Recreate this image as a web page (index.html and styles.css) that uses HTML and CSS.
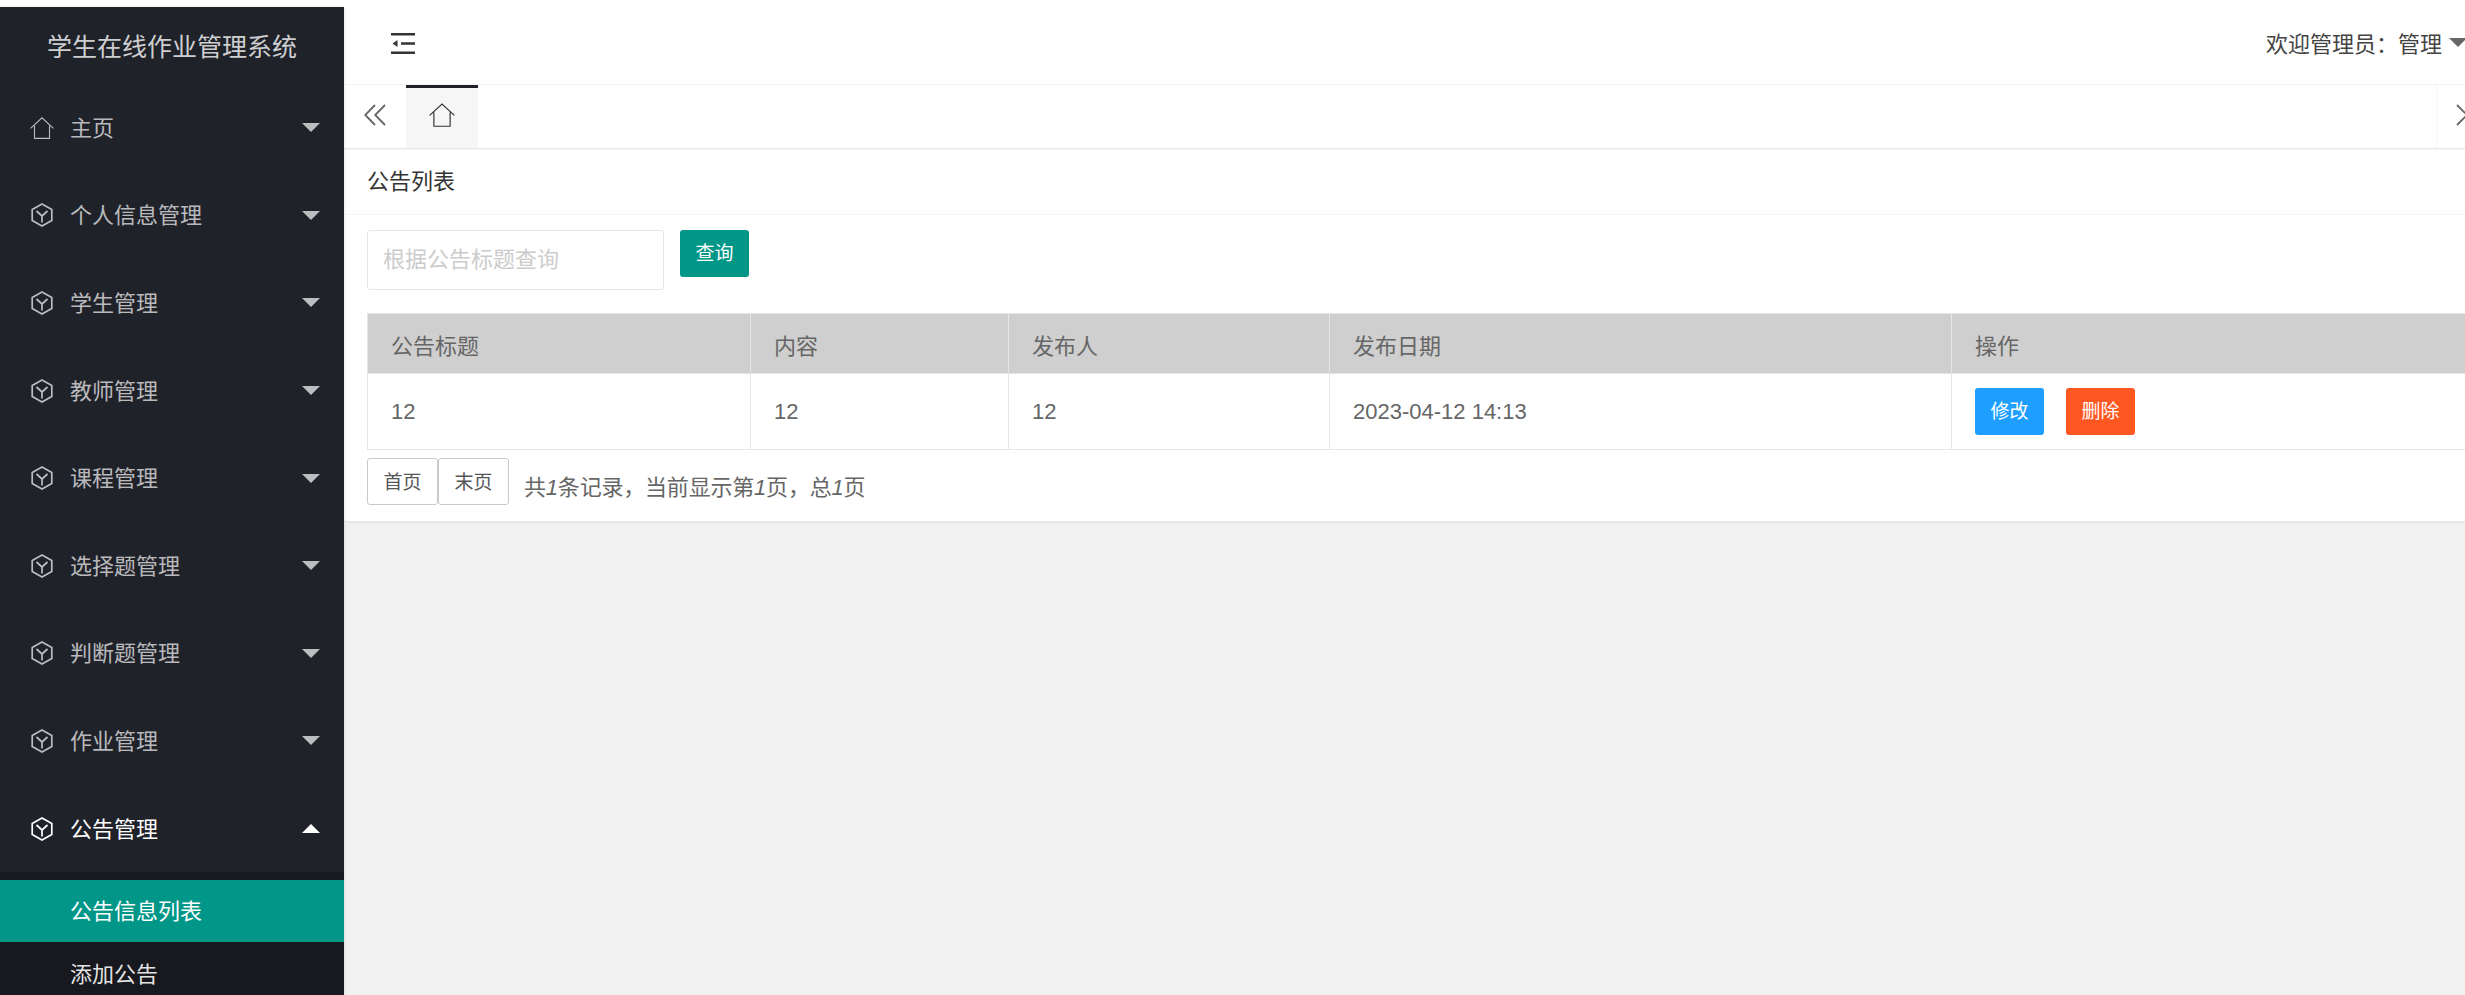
FILE: index.html
```html
<!DOCTYPE html>
<html lang="zh-CN">
<head>
<meta charset="utf-8">
<title>学生在线作业管理系统</title>
<link rel="stylesheet" href="styles.css">
</head>
<body>
<svg class="defs" width="0" height="0" aria-hidden="true">
  <symbol id="i-home" viewBox="0 0 24 22"><path d="M.6 11.300 12 .8l11.400 10.500M4.500 8.800v12.600h15V8.800" fill="none" stroke="currentColor" stroke-width="1.100"/></symbol>
  <symbol id="i-cube" viewBox="0 0 22 24"><path d="M11 1 20.800 6.600v10.800L11 23 1.200 17.400V6.600zM5.500 8l5.500 5 5.500-5M11 13v6.500" fill="none" stroke="currentColor" stroke-width="1.700"/></symbol>
</svg>
<div class="app">
  <aside class="side">
    <div class="logo">学生在线作业管理系统</div>
    <ul class="menu">
      <li class="mi"><svg class="mi-ic"><use href="#i-home"/></svg><span>主页</span><i class="caret"></i></li>
      <li class="mi"><svg class="mi-ic"><use href="#i-cube"/></svg><span>个人信息管理</span><i class="caret"></i></li>
      <li class="mi"><svg class="mi-ic"><use href="#i-cube"/></svg><span>学生管理</span><i class="caret"></i></li>
      <li class="mi"><svg class="mi-ic"><use href="#i-cube"/></svg><span>教师管理</span><i class="caret"></i></li>
      <li class="mi"><svg class="mi-ic"><use href="#i-cube"/></svg><span>课程管理</span><i class="caret"></i></li>
      <li class="mi"><svg class="mi-ic"><use href="#i-cube"/></svg><span>选择题管理</span><i class="caret"></i></li>
      <li class="mi"><svg class="mi-ic"><use href="#i-cube"/></svg><span>判断题管理</span><i class="caret"></i></li>
      <li class="mi"><svg class="mi-ic"><use href="#i-cube"/></svg><span>作业管理</span><i class="caret"></i></li>
      <li class="mi open"><svg class="mi-ic"><use href="#i-cube"/></svg><span>公告管理</span><i class="caret up"></i></li>
    </ul>
    <ul class="sub">
      <li class="sub-i active">公告信息列表</li>
      <li class="sub-i">添加公告</li>
    </ul>
  </aside>
  <main class="main">
    <header class="top">
      <svg class="shrink" viewBox="0 0 24 21"><path d="M0 0h24v2.400H0zM0 18.600h24V21H0zM10 9.300h14v2.400H10zM1.500 10.500 6.500 7v7z" fill="#333"/></svg>
      <div class="user">欢迎管理员：管理<i class="caret dark"></i></div>
    </header>
    <nav class="tabs">
      <div class="tab-arrow">
        <svg class="chev2" viewBox="0 0 22 22"><path d="M11 1 1.200 11 11 21M21 1l-9.800 10L21 21" fill="none" stroke="#666" stroke-width="1.800"/></svg>
      </div>
      <div class="tab"><svg class="tab-ic"><use href="#i-home"/></svg></div>
      <div class="tab-fill"></div>
      <div class="tab-next">
        <svg class="chev" viewBox="0 0 12 22"><path d="M1 1l10 10L1 21" fill="none" stroke="#666" stroke-width="1.800"/></svg>
      </div>
    </nav>
    <section class="panel">
      <h2 class="panel-title">公告列表</h2>
      <div class="panel-body">
        <form class="search">
          <input class="search-input" type="text" placeholder="根据公告标题查询">
          <button class="btn btn-green" type="button">查询</button>
        </form>
        <table class="grid">
          <colgroup><col class="c1"><col class="c2"><col class="c3"><col class="c4"><col></colgroup>
          <thead><tr><th>公告标题</th><th>内容</th><th>发布人</th><th>发布日期</th><th>操作</th></tr></thead>
          <tbody><tr><td>12</td><td>12</td><td>12</td><td>2023-04-12 14:13</td>
            <td class="ops"><button class="btn btn-blue" type="button">修改</button><button class="btn btn-red" type="button">删除</button></td></tr></tbody>
        </table>
        <div class="pager">
          <a class="pg">首页</a><a class="pg">末页</a>
          <span class="pg-info">共<i>1</i>条记录，当前显示第<i>1</i>页，总<i>1</i>页</span>
        </div>
      </div>
    </section>
  </main>
</div>
</body>
</html>
```
FILE: styles.css
```css
* { box-sizing: border-box; }
html, body { margin: 0; height: 100%; overflow: hidden; }
body {
  background: #fff;
  font-family: "Liberation Sans", "Noto Sans CJK SC", sans-serif;
  font-size: 22px;
  color: #666;
}
ul { list-style: none; margin: 0; padding: 0; }
.defs { position: absolute; }
.app { display: flex; width: 2465px; height: 995px; overflow: hidden; }

.side {
  flex: none;
  width: 344px;
  margin-top: 7px;
  background: #20222a;
  box-shadow: 1px 0 3px rgba(0, 0, 0, .08);
  position: relative;
  z-index: 2;
}
.logo {
  height: 77px;
  display: flex;
  align-items: center;
  justify-content: center;
  padding-bottom: 1px;
  font-size: 25px;
  color: rgba(255, 255, 255, .8);
}
.mi {
  height: 87.6px;
  display: flex;
  align-items: center;
  padding-left: 30px;
  color: rgba(255, 255, 255, .7);
}
.mi span { margin-left: 16px; padding-bottom: 4px; }
.mi-ic { width: 24px; height: 24px; flex: none; }
.mi.open { color: #fff; }
.caret {
  width: 0;
  height: 0;
  border-style: solid;
  border-width: 9px 9px 0;
  border-color: rgba(255, 255, 255, .7) transparent transparent;
  margin-left: auto;
  margin-right: 24px;
}
.caret.up { border-width: 0 9px 9px; border-color: transparent transparent #fff; }
.caret.dark { margin: 0 0 0 7px; border-color: #666 transparent transparent; }
.sub { background: #18191e; padding-top: 7.500px; height: 200px; }
.sub-i {
  height: 62.600px;
  display: flex;
  align-items: center;
  padding-left: 70px;
  padding-bottom: 4px;
  color: rgba(255, 255, 255, .9);
}
.sub-i.active { background: #009688; color: #fff; }

.main { flex: none; width: 2155px; height: 995px; background: #f1f1f1; }
.top {
  height: 85px;
  background: #fff;
  border-bottom: 1px solid #f6f6f6;
  display: flex;
  align-items: center;
  padding-left: 47px;
  padding-right: 16px;
}
.shrink { width: 24px; height: 21px; margin-top: 2px; }
.user { margin-left: auto; display: flex; align-items: center; color: #444; padding-right: 16px; }
.tabs {
  height: 63px;
  background: #fff;
  display: flex;
  box-shadow: 0 1px 2px rgba(0, 0, 0, .12);
  position: relative;
}
.tab-arrow { width: 62px; display: flex; align-items: center; padding-left: 20px; }
.chev2 { width: 22px; height: 22px; margin-bottom: 4px; }
.tab {
  width: 72px;
  background: #f6f6f6;
  border-top: 3px solid #20222a;
  display: flex;
  align-items: center;
  justify-content: center;
  color: #333;
}
.tab-ic { width: 26px; height: 24px; margin-bottom: 7px; }
.tab-fill { flex: 1; }
.tab-next {
  width: 63px;
  border-left: 1px solid #f6f6f6;
  display: flex;
  align-items: center;
  padding-left: 19px;
}
.chev { width: 12px; height: 22px; margin-bottom: 4px; }

.panel {
  background: #fff;
  height: 373px;
  box-shadow: 0 1px 3px rgba(0, 0, 0, .08);
  border-radius: 3px;
}
.panel-title {
  margin: 0;
  height: 67px;
  padding: 0 23px 5px;
  display: flex;
  align-items: center;
  font-size: 22px;
  font-weight: 400;
  color: #333;
  border-bottom: 1px solid #f6f6f6;
}
.panel-body { padding: 15px 0 0 23px; }
.search { display: flex; align-items: flex-start; gap: 16px; height: 83px; margin: 0; }
.search-input {
  width: 297px;
  height: 60px;
  padding: 0 15px;
  border: 1px solid #e6e6e6;
  border-radius: 3px;
  font: inherit;
  color: #666;
  background: #fff;
  outline: 0;
}
.search-input::placeholder { color: #ccc; opacity: 1; }
.btn {
  width: 69px;
  height: 47px;
  padding: 0 0 5px;
  border: 0;
  border-radius: 3px;
  color: #fff;
  font-family: inherit;
  font-size: 19px;
}
.btn-green { background: #009688; }
.btn-blue { background: #1e9fff; }
.btn-red { background: #ff5722; margin-left: 22px; }

.grid {
  table-layout: fixed;
  width: 2109px;
  border-collapse: collapse;
  border: 1px solid #e6e6e6;
}
.c1 { width: 383px; }
.c2 { width: 258px; }
.c3 { width: 321px; }
.c4 { width: 622px; }
.grid th, .grid td {
  padding: 0 23px;
  border: 1px solid #e6e6e6;
  text-align: left;
  font-weight: 400;
  color: #666;
}
.grid th { height: 60px; background: #cfcfcf; }
.grid td { height: 76px; }
.grid td.ops { padding-bottom: 0; }

.pager { display: flex; align-items: flex-start; margin-top: 8px; }
.pg {
  width: 71px;
  height: 47px;
  display: flex;
  align-items: center;
  justify-content: center;
  padding-bottom: 3px;
  border: 1px solid #c9c9c9;
  border-radius: 3px;
  font-size: 19px;
  color: #555;
}
.pg-info { margin: 11px 0 0 15px; letter-spacing: -.2px; }
```
